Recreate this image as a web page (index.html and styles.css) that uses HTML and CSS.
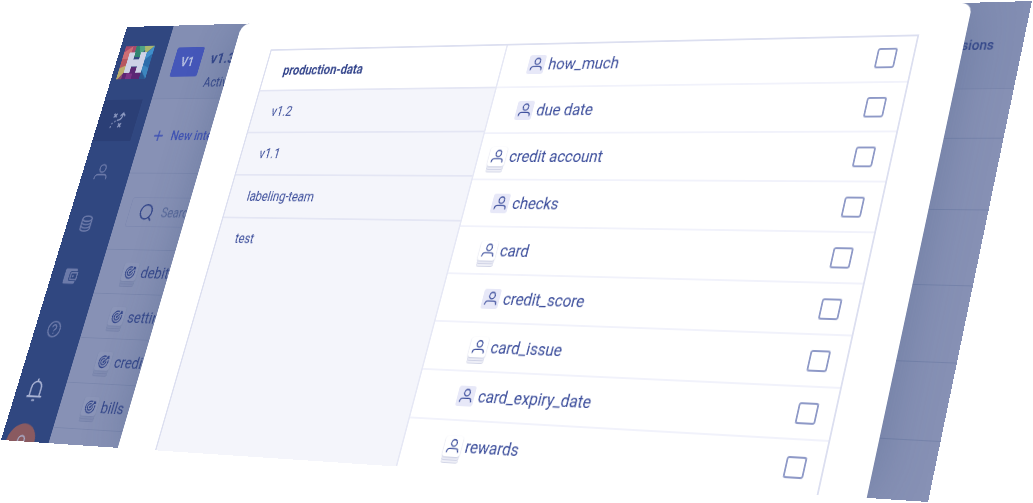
FILE: index.html
```html
<!DOCTYPE html>
<html lang="en">
<head>
  <meta charset="UTF-8" />
  <meta name="viewport" content="width=device-width, initial-scale=1.0"/>
  <title>Move intents</title>
  <link rel="stylesheet" href="styles.css">
</head>
<body>
  <svg class="defs" aria-hidden="true">
    <symbol id="person" viewBox="0 0 24 24">
      <circle cx="12.500" cy="7.500" r="5"/>
      <path d="M2 22v-1.500a4.500 4.500 0 0 1 4.500-4.500h11a4.500 4.500 0 0 1 4.500 4.500v1.500"/>
    </symbol>
    <symbol id="target" viewBox="0 0 24 24">
      <path d="M20.500 9a9.500 9.500 0 1 1-5.500-5.500"/>
      <path d="M16.500 11a5.300 5.300 0 1 1-3.500-4"/>
      <circle cx="11.500" cy="12.500" r="1"/>
      <path d="M12 12l6-6M18 6V2.500M18 6h4M18 6l3-3"/>
    </symbol>
  </svg>

  <div class="stage">
    <div class="scene">
      <nav class="sidebar">
        <svg class="logo" viewBox="0 0 46 42">
          <path fill="#a84a6c" d="M0 0h24v12H0z"/>
          <path fill="#cd6e74" d="M0 8l12-8v14L0 24z"/>
          <path fill="#b7575f" d="M0 16h10v14H0z"/>
          <path fill="#bcae6c" d="M0 28l10-4v18H0z"/>
          <path fill="#8a4a6e" d="M10 32v10H2z"/>
          <path fill="#2f8370" d="M17 0h13v14H17z"/>
          <path fill="#4fa284" d="M22 0h14l-9 12z"/>
          <path fill="#a9b76c" d="M30 0h16L34 10z"/>
          <path fill="#3f8fcb" d="M46 0v24H35V10z"/>
          <path fill="#2c6dab" d="M35 18l11-8v20H35z"/>
          <path fill="#3c86bf" d="M35 24l11 4v14H35z"/>
          <path fill="#2b5790" d="M35 30l11 12H31z"/>
          <path fill="#5c2774" d="M8 34h28v8H8z"/>
          <path fill="#7c3487" d="M14 34h9v8h-9z"/>
          <path fill="#5c2774" d="M18 27h9v8h-9z"/>
          <path fill="#cdd2e6" d="M9 8h9v9h9V8h9v26h-9v-8h-9v8H9z"/>
        </svg>
        <a class="nav-item active" href="#" aria-label="Flows">
          <svg viewBox="0 0 24 24"><path d="M4 3l5 5M9 3L4 8M15 16l5 5M20 16l-5 5M11 12c5 0 8-3 8-9M15 6l4-4 4 4"/><path stroke-dasharray="2 3" d="M3 22c0-6 2-8 8-9"/></svg>
        </a>
        <a class="nav-item" href="#" aria-label="Entities"><svg viewBox="0 0 24 24"><use href="#person"/></svg></a>
        <a class="nav-item" href="#" aria-label="Data">
          <svg viewBox="0 0 24 24"><ellipse cx="12" cy="5.500" rx="8" ry="3.500"/><path d="M4 5.500v13c0 2 3.600 3.500 8 3.500s8-1.500 8-3.500v-13M4 10c0 2 3.600 3.500 8 3.500s8-1.500 8-3.500M4 14.300c0 2 3.600 3.500 8 3.500s8-1.500 8-3.500"/></svg>
        </a>
        <a class="nav-item" href="#" aria-label="Wallet">
          <svg viewBox="0 0 24 24"><path class="solid" d="M4 2h16q2 0 2 2v1.500h-9q-3 0-3 3v7q0 3 3 3h9V20q0 2-2 2H4q-2 0-2-2V4q0-2 2-2z"/><path d="M23 7.500H13.500q-1 0-1 1v7q0 1 1 1H23z"/><circle class="solid" cx="16.500" cy="12" r="1.500"/></svg>
        </a>
        <a class="nav-item" href="#" aria-label="Help">
          <svg viewBox="0 0 24 24"><circle cx="12" cy="12" r="10"/><path d="M8.800 9.500a3.200 3.200 0 1 1 4.500 3c-1 .5-1.300 1-1.300 2.300M12 16.800v1.400"/></svg>
        </a>
        <a class="nav-item bell" href="#" aria-label="Notifications">
          <svg viewBox="0 0 24 26"><path d="M5 20V11a7 7 0 0 1 14 0v9M1.500 20.500h21M12 4V1M10 24.500h4"/></svg>
        </a>
        <a class="avatar" href="#" aria-label="Account"><svg viewBox="0 0 24 24"><use href="#person"/></svg></a>
      </nav>

      <main class="main">
        <header class="topbar">
          <span class="badge">V1</span>
          <div class="version-name">
            <h1>v1.3</h1>
            <p>Active</p>
          </div>
          <a class="versions" href="#">Versions</a>
        </header>
        <div class="panels">
          <section class="intents">
            <div class="toolbar">
              <button class="new-intent" type="button">
                <svg viewBox="0 0 16 16"><path d="M8 1v14M1 8h14"/></svg>New intent
              </button>
            </div>
            <div class="search">
              <label class="search-box">
                <svg viewBox="0 0 24 24"><circle cx="11" cy="11" r="9"/><path d="M17 18l4 4"/></svg>
                <input type="text" placeholder="Search" aria-label="Search">
              </label>
            </div>
            <ul class="intent-list">
              <li><span class="chip stack"><svg><use href="#target"/></svg></span>debit</li>
              <li><span class="chip stack"><svg><use href="#target"/></svg></span>settings</li>
              <li><span class="chip stack"><svg><use href="#target"/></svg></span>credit</li>
              <li><span class="chip stack"><svg><use href="#target"/></svg></span>bills</li>
            </ul>
          </section>
          <section class="detail">
            <div class="detail-head"></div>
            <div></div>
            <div></div>
            <div></div>
            <div></div>
          </section>
        </div>
      </main>

      <div class="modal" role="dialog" aria-label="Move intents">
        <div class="picker">
          <div class="tabs">
            <button class="tab selected" type="button">production-data</button>
            <button class="tab" type="button">v1.2</button>
            <button class="tab" type="button">v1.1</button>
            <button class="tab" type="button">labeling-team</button>
            <button class="tab last" type="button">test</button>
          </div>
          <div class="entities">
            <label class="entity child"><span class="chip"><svg><use href="#person"/></svg></span>how_much<input type="checkbox"></label>
            <label class="entity child"><span class="chip"><svg><use href="#person"/></svg></span>due date<input type="checkbox"></label>
            <label class="entity"><span class="chip stack"><svg><use href="#person"/></svg></span>credit account<input type="checkbox"></label>
            <label class="entity child"><span class="chip"><svg><use href="#person"/></svg></span>checks<input type="checkbox"></label>
            <label class="entity child"><span class="chip stack"><svg><use href="#person"/></svg></span>card<input type="checkbox"></label>
            <label class="entity grandchild"><span class="chip"><svg><use href="#person"/></svg></span>credit_score<input type="checkbox"></label>
            <label class="entity grandchild"><span class="chip stack"><svg><use href="#person"/></svg></span>card_issue<input type="checkbox"></label>
            <label class="entity grandchild"><span class="chip"><svg><use href="#person"/></svg></span>card_expiry_date<input type="checkbox"></label>
            <label class="entity grandchild"><span class="chip stack"><svg><use href="#person"/></svg></span>rewards<input type="checkbox"></label>
          </div>
        </div>
      </div>
    </div>
  </div>
</body>
</html>
```
FILE: styles.css
```css
* {
  box-sizing: border-box;
}

body {
  margin: 0;
  background: #fff;
  color: #3b4d9b;
  font-family: Roboto, sans-serif;
  font-size: 16px;
}

h1, p, ul {
  margin: 0;
  padding: 0;
}

ul {
  list-style: none;
}

a {
  color: inherit;
  text-decoration: none;
}

button {
  border: none;
  background: none;
  padding: 0;
  font: inherit;
  color: inherit;
  text-align: left;
  cursor: pointer;
}

svg {
  fill: none;
  stroke: currentColor;
  stroke-width: 2;
}

.defs {
  display: none;
}

.stage {
  height: 100vh;
  overflow: hidden;
}

/* the whole app window is tilted back in space */
.scene {
  position: relative;
  display: flex;
  width: calc(100% + 167px);
  height: calc(100vh + 5px);
  overflow: hidden;
  background: #8791b5;
  transform-origin: 0 0;
  transform: matrix3d(0.607667, -0.0218083, 0, -0.000141958, -0.24811, 0.775886, 0, -0.0000843307, 0, 0, 1, 0, 127, 27, 0, 1);
}

/* sidebar */
.sidebar {
  display: flex;
  flex-direction: column;
  flex-shrink: 0;
  width: 74px;
  padding-top: 25px;
  background: #304780;
  color: #6c7aa9;
}

.logo {
  flex-shrink: 0;
  width: 46px;
  height: 42px;
  margin: 0 0 26px 8px;
  stroke: none;
}

.nav-item {
  display: flex;
  align-items: center;
  justify-content: center;
  flex-shrink: 0;
  width: 60px;
  height: 52px;
  margin-bottom: 12px;
}

.nav-item svg {
  width: 22px;
  height: 22px;
}

.nav-item .solid {
  fill: currentColor;
  stroke: none;
}

.nav-item.active {
  background: #2b3f76;
  color: #8f9bc2;
}

.nav-item.bell {
  height: 68px;
  margin-bottom: 6px;
  color: #a9b3d4;
}

.nav-item.bell svg {
  width: 26px;
  height: 30px;
}

.avatar {
  display: flex;
  justify-content: center;
  flex-shrink: 0;
  width: 44px;
  height: 44px;
  margin-left: 8px;
  padding-top: 12px;
  border-radius: 50%;
  background: #8a5a60;
  color: #a9a9c4;
}

.avatar svg {
  width: 24px;
  height: 24px;
}

/* page under the dialog */
.main {
  flex: 1;
  display: flex;
  flex-direction: column;
  color: #33468a;
}

.topbar {
  display: flex;
  align-items: center;
  flex-shrink: 0;
  gap: 14px;
  height: 93px;
  padding: 0 32px 0 17px;
  border-bottom: 1px solid #7b87ad;
  background: #838eb3;
}

.badge {
  width: 42px;
  height: 37px;
  border-radius: 3px;
  background: #4557b9;
  color: #b3bddf;
  font-weight: bold;
  line-height: 37px;
  text-align: center;
}

.version-name {
  padding-top: 22px;
}

.topbar h1 {
  font-size: 19px;
  line-height: 32px;
}

.topbar p {
  font-size: 16px;
  line-height: 28px;
}

.versions {
  margin-left: auto;
  font-size: 15px;
  font-weight: 500;
}

.panels {
  flex: 1;
  display: flex;
}

.intents {
  flex: 1;
}

.toolbar {
  display: flex;
  align-items: center;
  height: 92px;
  padding-left: 20px;
  border-bottom: 1px solid #7b87ad;
}

.new-intent {
  display: flex;
  align-items: center;
  gap: 12px;
  color: #4053b4;
  font-weight: 500;
}

.new-intent svg {
  width: 15px;
  height: 15px;
}

.search {
  padding: 29px 17px 27px;
  border-bottom: 1px solid #7b87ad;
}

.search-box {
  display: flex;
  align-items: center;
  gap: 11px;
  height: 36px;
  padding-left: 15px;
  border: 1px solid #7e89b0;
  border-radius: 3px;
}

.search-box svg {
  width: 23px;
  height: 23px;
}

.search-box input {
  flex: 1;
  border: none;
  padding: 0;
  background: none;
  font: inherit;
}

.search-box input::placeholder {
  color: #566798;
}

.intent-list li {
  display: flex;
  align-items: center;
  gap: 6px;
  height: 53px;
  padding-left: 35px;
  border-bottom: 1px solid #7b87ad;
  font-size: 19px;
}

.detail {
  width: 240px;
}

.detail div {
  height: 77px;
  border-bottom: 1px solid #7784ab;
}

.detail .detail-head {
  height: 52px;
}

.detail .detail-head + div {
  height: 74px;
}

/* dialog */
.modal {
  position: absolute;
  top: 0;
  bottom: 0;
  left: 179px;
  right: 66px;
  padding: 33px 53px 0 55px;
  border-radius: 12px 12px 0 0;
  background: #fff;
  box-shadow: 0 0 60px rgba(50, 75, 120, 0.3);
}

.picker {
  display: flex;
  height: 100%;
  overflow: hidden;
  border: 2px solid #dcdff0;
  border-bottom: none;
}

.tabs {
  display: flex;
  flex-direction: column;
  flex-shrink: 0;
  width: 335px;
  border-right: 2px solid #e6e8f5;
}

.tab {
  flex-shrink: 0;
  height: 51px;
  padding-left: 26px;
  border-bottom: 2px solid #e4e6f4;
  background: #f4f5fb;
}

.tab.selected {
  height: 50px;
  background: #fff;
  color: #34458c;
  font-weight: bold;
}

.tab.last {
  flex: 1;
  padding-bottom: 224px;
  border-bottom: none;
}

.entities {
  flex: 1;
  margin-top: -3px;
}

.entity {
  display: flex;
  align-items: center;
  gap: 5px;
  height: 53px;
  padding: 0 19px 0 14px;
  border-bottom: 2px solid #f1f2fb;
  font-size: 19px;
}

.entity:last-child {
  border-bottom: none;
}

.entity.child {
  padding-left: 34px;
}

.entity.grandchild {
  padding-left: 54px;
}

.entity input {
  appearance: none;
  width: 23px;
  height: 22px;
  margin: 0 0 0 auto;
  border: 2px solid #8e99c7;
  border-radius: 3px;
  background: #fff;
}

/* small square icons, the stacked ones look like a pile of cards */
.chip {
  display: flex;
  align-items: center;
  justify-content: center;
  width: 22px;
  height: 22px;
  border-radius: 3px;
  background: #e7e8f8;
}

.chip svg {
  width: 17px;
  height: 17px;
}

.chip.stack {
  background: #fff;
  box-shadow: 0 1px 2px #c3c7de, 0 3px 0 #eeeff7, 0 4px 0 #cfd2e5, 0 6px 0 #eeeff7, 0 7px 0 #d3d6e7;
}

.intent-list .chip.stack {
  background: #8b95b8;
  box-shadow: 0 1px 2px #7783aa, 0 3px 0 #828db2, 0 4px 0 #7783aa, 0 6px 0 #808bb1, 0 7px 0 #7783aa;
}
```
